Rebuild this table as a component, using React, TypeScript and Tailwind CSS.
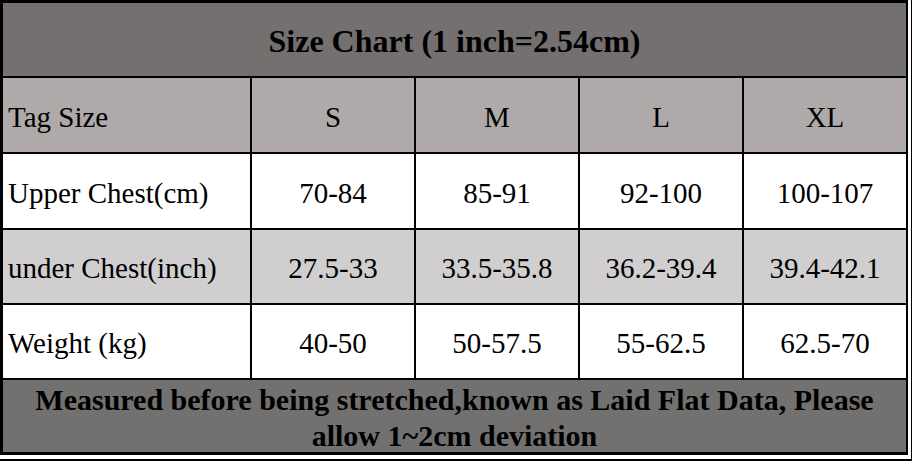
import { Fragment } from "react"

const sizes = ["S", "M", "L", "XL"]

const rows = [
  { label: "Upper Chest(cm)", values: ["70-84", "85-91", "92-100", "100-107"], bg: "bg-white" },
  { label: "under Chest(inch)", values: ["27.5-33", "33.5-35.8", "36.2-39.4", "39.4-42.1"], bg: "bg-[#d0cecf]" },
  { label: "Weight (kg)", values: ["40-50", "50-57.5", "55-62.5", "62.5-70"], bg: "bg-white" },
]

export default function App() {
  return (
    <div className="w-[912px] h-[462px] bg-white font-['Liberation_Serif',serif] text-black">
      <div className="w-[912px] h-[461px] border-r border-b-2 border-black pr-[3px] pb-[4px]">
        <div className="h-full border-t-[3px] border-l-[3px] border-r-2 border-b-[3px] border-black bg-black grid grid-cols-[247px_162px_162px_162px_162px] grid-rows-[73px_74px_74px_73px_73px_72px] gap-[2px]">
          <div className="col-span-5 bg-[#73706f] flex items-center justify-center pt-[3px] text-[32px] font-bold">
            Size Chart (1 inch=2.54cm)
          </div>

          <div className="bg-[#afaaa9] flex items-center pl-[5px] pt-[5px] text-[29px]">Tag Size</div>
          {sizes.map((s) => (
            <div key={s} className="bg-[#afaaa9] flex items-center justify-center pt-[5px] text-[29px]">
              {s}
            </div>
          ))}

          {rows.map((r) => (
            <Fragment key={r.label}>
              <div className={`${r.bg} flex items-center pl-[5px] pt-[5px] text-[29px] whitespace-nowrap`}>
                {r.label}
              </div>
              {r.values.map((v, i) => (
                <div key={i} className={`${r.bg} flex items-center justify-center pt-[5px] text-[29px]`}>
                  {v}
                </div>
              ))}
            </Fragment>
          ))}

          <div className="col-span-5 bg-[#737170] pt-[2px] text-center text-[30px] leading-[36px] font-bold px-4">
            Measured before being stretched,known as Laid Flat Data, Please allow 1~2cm deviation
          </div>
        </div>
      </div>
    </div>
  )
}
